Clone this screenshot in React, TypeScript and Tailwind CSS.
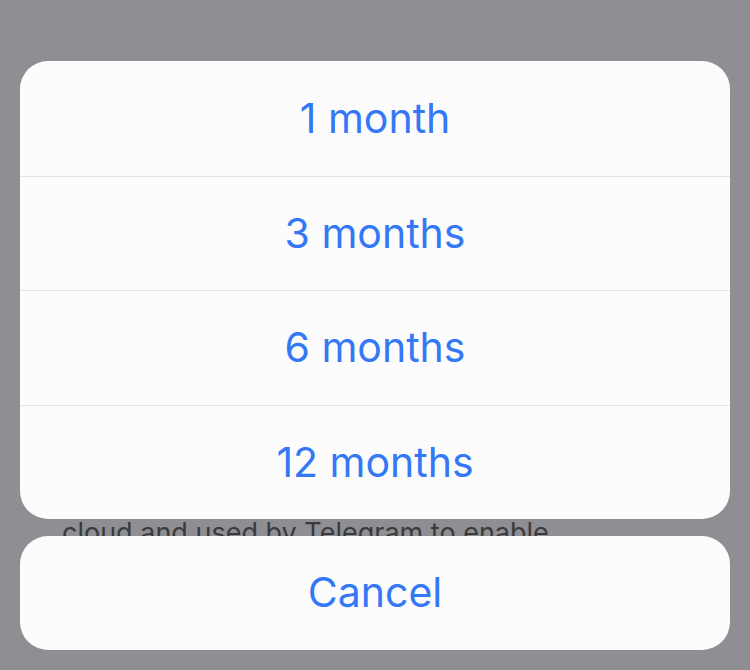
import React from "react";

const options = ["1 month", "3 months", "6 months", "12 months"];

export default function App() {
  return (
    <div
      className="relative h-[670px] w-[750px] overflow-hidden bg-[#8e8e93]"
      style={{ fontFamily: "Inter, 'Liberation Sans', sans-serif" }}
    >
      {/* dimmed page content underneath */}
      <div className="pl-[62px] pt-[517px] text-[27px] leading-[32px] text-[#3a3a3c]">
        cloud and used by Telegram to enable
      </div>

      {/* action sheet overlay */}
      <div className="absolute inset-0 flex flex-col px-[20px] pt-[61px]">
        <div className="flex flex-col overflow-hidden rounded-[28px] bg-[#fcfcfd]">
          {options.map((o, i) => (
            <div
              key={o}
              className={`flex h-[114.5px] items-center justify-center text-[41px] text-[#3478f6] ${
                i > 0 ? "border-t border-[#e3e3e6]" : ""
              }`}
            >
              {o}
            </div>
          ))}
        </div>
        <div className="mt-[17px] flex h-[114px] items-center justify-center rounded-[28px] bg-[#fcfcfd] text-[41px] text-[#3478f6]">
          Cancel
        </div>
      </div>
    </div>
  );
}
